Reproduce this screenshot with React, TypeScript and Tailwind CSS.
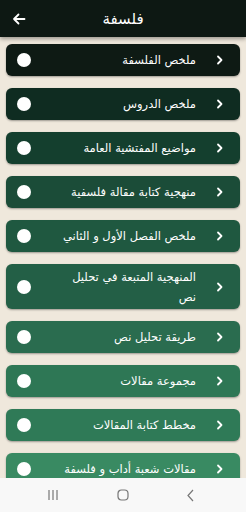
import React from "react";

const items: { t: string; c: string; two?: boolean }[] = [
  { t: "ملخص الفلسفة", c: "bg-[#0e1a14]" },
  { t: "ملخص الدروس", c: "bg-[#0f2c21]" },
  { t: "مواضيع المفتشية العامة", c: "bg-[#143f2e]" },
  { t: "منهجية كتابة مقالة فلسفية", c: "bg-[#1b4c38]" },
  { t: "ملخص الفصل الأول و الثاني", c: "bg-[#1f5840]" },
  { t: "المنهجية المتبعة في تحليل نص", c: "bg-[#235f46]", two: true },
  { t: "طريقة تحليل نص", c: "bg-[#2a6c4f]" },
  { t: "مجموعة مقالات", c: "bg-[#2e7755]" },
  { t: "مخطط كتابة المقالات", c: "bg-[#2f7a57]" },
  { t: "مقالات شعبة أداب و فلسفة", c: "bg-[#398a62]" },
];

export default function App() {
  return (
    <div
      className="w-[246px] h-[512px] bg-[#efe8dc] flex flex-col overflow-hidden"
      style={{ fontFamily: '"DejaVu Sans", "Noto Sans", sans-serif' }}
    >
      <div className="h-[37px] shrink-0 bg-[#0d1813] flex items-center relative shadow-[0_2px_4px_rgba(0,0,0,0.35)] z-10">
        <svg className="absolute left-[12px] top-[12px]" width="14" height="14" viewBox="0 0 14 14" fill="none" stroke="white" strokeWidth="1.8" strokeLinecap="round" strokeLinejoin="round">
          <path d="M12.5 7H2M6.5 2.5L2 7l4.5 4.5" />
        </svg>
        <div className="flex-1 text-center text-white text-[15px] leading-[20px]" dir="rtl">فلسفة</div>
      </div>
      <div className="flex-1 flex flex-col gap-[12px] px-[6px] pt-[7px] overflow-hidden">
        {items.map((it, i) => (
          <div
            key={i}
            className={`${it.c} shrink-0 rounded-[6px] flex items-center shadow-[0_1px_2px_rgba(0,0,0,0.35)] ${it.two ? "h-[45px]" : "h-[32px]"}`}
          >
            <div className="w-[14px] h-[14px] rounded-full bg-white ml-[11px] shrink-0" />
            <div
              dir="rtl"
              className="flex-1 text-white text-[11.5px] leading-[20px] pl-[6px] mr-[20px] text-right"
            >
              {it.two ? (
                <>
                  المنهجية المتبعة في تحليل
                  <br />
                  نص
                </>
              ) : (
                it.t
              )}
            </div>
            <svg className="shrink-0 mr-[16px]" width="8" height="10" viewBox="0 0 8 10" fill="none" stroke="white" strokeWidth="1.8" strokeLinecap="round" strokeLinejoin="round">
              <path d="M2 1.5L5.5 5 2 8.5" />
            </svg>
          </div>
        ))}
      </div>
      <div className="h-[34px] shrink-0 bg-[#f8f8f8] flex items-center justify-between pl-[47px] pr-[52px]">
        <svg width="12" height="10" viewBox="0 0 12 10" stroke="#777" strokeWidth="1.2">
          <path d="M2 0v10M6 0v10M10 0v10" />
        </svg>
        <svg width="12" height="12" viewBox="0 0 12 12" fill="none" stroke="#777" strokeWidth="1.2">
          <rect x="1" y="1" width="10" height="10" rx="3.5" />
        </svg>
        <svg width="7" height="13" viewBox="0 0 7 13" fill="none" stroke="#777" strokeWidth="1.2">
          <path d="M6 1L1 6.5 6 12" />
        </svg>
      </div>
    </div>
  );
}
